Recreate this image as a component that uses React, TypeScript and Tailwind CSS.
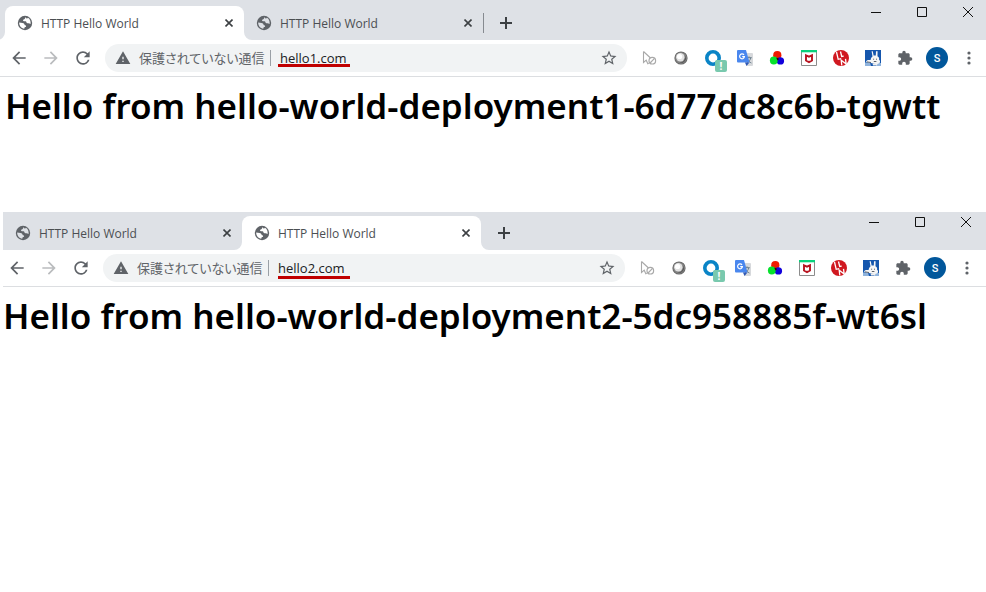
import type { ReactNode } from "react";
import { clsx } from "clsx";
import { MdArrowBack, MdArrowForward, MdExtension, MdRefresh, MdStarBorder, MdWarning } from "react-icons/md";

const UI_FONT = "font-['Open_Sans','Noto_Sans_CJK_JP',sans-serif]";
const HEADING_FONT = "font-['Noto_Sans','Open_Sans',sans-serif]";

function GlobeIcon({ land }: { land: string }) {
  return (
    <svg viewBox="0 0 16 16" className={clsx("size-4 shrink-0", land)} fill="currentColor" aria-hidden="true">
      <circle cx="8" cy="8" r="7.2" fill="#5f6368" />
      <path d="M8.6 2.2C8 3 8.3 3.7 7.3 4.2 6.5 4.6 5.9 4.6 6 5.6c.1.8 1 .7 1.9.7 1 0 1.5.4 1.6 1.2.1.7.8.8 1.5.7.9-.1 1.7.1 2.6.7.3-2.6-.6-5-2.6-6.1-.4.9-1.3 1-1.7.4-.2-.3-.3-.7-.7-1z" />
      <path d="M2.2 7.6c1.2.3 2.3.2 3.3.3 1.2.1 1.9.6 2 1.5.1.8.8.7 1.3 1 .7.5.1 1.4-.6 1.7-.8.3-.7.9-.9 1.6-3-.2-5.3-2.7-5.1-6.1z" />
    </svg>
  );
}

function CloseGlyph() {
  return (
    <svg viewBox="0 0 8 8" className="size-2" aria-hidden="true">
      <path d="M.5.5l7 7M7.5.5l-7 7" stroke="#3c4043" strokeWidth="1.6" fill="none" />
    </svg>
  );
}

function TabFoot({ side }: { side: "left" | "right" }) {
  return (
    <svg
      viewBox="0 0 8 8"
      className={clsx("absolute bottom-0 size-2", side === "left" ? "-left-2" : "-right-2")}
      aria-hidden="true"
    >
      <path d={side === "left" ? "M8 0v8H0a8 8 0 0 0 8-8z" : "M0 0v8h8a8 8 0 0 1-8-8z"} fill="#fff" />
    </svg>
  );
}

function Tab({ title, active }: { title: string; active: boolean }) {
  return (
    <div
      className={clsx(
        "relative flex h-full w-[239px] items-center pr-[11px] pl-3",
        active && "rounded-t-lg bg-white",
      )}
    >
      {active && <TabFoot side="left" />}
      <button type="button" role="tab" aria-selected={active} className="flex flex-1 items-center gap-2 text-xs text-[#4b4e52]">
        <GlobeIcon land={active ? "text-white" : "text-[#dee1e6]"} />
        <span className="pt-0.5">{title}</span>
      </button>
      <button type="button" aria-label={`Close ${title}`} className="flex size-2 items-center justify-center">
        <CloseGlyph />
      </button>
      {active && <TabFoot side="right" />}
    </div>
  );
}

function WindowControls({ className }: { className: string }) {
  return (
    <div className={clsx("ml-auto flex items-start gap-9", className)}>
      <button type="button" aria-label="Minimize">
        <svg viewBox="0 0 10 10" className="size-2.5" aria-hidden="true">
          <path d="M0 5.5h10" stroke="#111" />
        </svg>
      </button>
      <button type="button" aria-label="Maximize">
        <svg viewBox="0 0 10 10" className="size-2.5" aria-hidden="true">
          <path d="M.5.5h9v9h-9z" stroke="#111" fill="none" />
        </svg>
      </button>
      <button type="button" aria-label="Close window">
        <svg viewBox="0 0 10 10" className="size-2.5" aria-hidden="true">
          <path d="M0 0l10 10M10 0 0 10" stroke="#111" />
        </svg>
      </button>
    </div>
  );
}

function ToolButton({ label, children }: { label: string; children: ReactNode }) {
  return (
    <button type="button" aria-label={label} className="flex h-7 w-8 shrink-0 items-center justify-center text-[#5f6368]">
      {children}
    </button>
  );
}

function CursorBlockedIcon() {
  return (
    <svg viewBox="0 0 16 16" className="size-4" fill="none" stroke="#a9a9a9" aria-hidden="true">
      <path d="M2.5 1.5v11l2.7-2.3 1.6 3.6 1-.5M2.5 1.5l7 6.5" strokeWidth="1.1" />
      <circle cx="11.3" cy="10.7" r="3.3" strokeWidth="1.2" />
      <path d="M9.1 13l4.4-4.6" strokeWidth="1.2" />
    </svg>
  );
}

function SphereIcon() {
  return (
    <svg viewBox="0 0 16 16" className="size-4" aria-hidden="true">
      <circle cx="8" cy="8" r="6.6" fill="#686868" />
      <circle cx="8" cy="8" r="5.8" fill="#858585" />
      <circle cx="7.3" cy="7.3" r="4.2" fill="#e2e2e2" />
      <circle cx="6.6" cy="6.5" r="2.6" fill="#fff" />
      <path d="M12.3 5.5a5 5 0 0 1-6.8 6.8 5.5 5.5 0 0 0 6.8-6.8z" fill="#4f4f4f" />
    </svg>
  );
}

function RingAlertIcon() {
  return (
    <span className="relative block size-4">
      <svg viewBox="0 0 16 16" className="size-4" aria-hidden="true">
        <circle cx="8" cy="8" r="6.2" fill="none" stroke="#0a84c6" strokeWidth="3.6" />
      </svg>
      <span className="absolute top-2.5 left-2.5 flex h-3 w-3 items-center justify-center rounded-xs bg-[#79c9ae] text-[10px] leading-3 font-bold text-white">
        !
      </span>
    </span>
  );
}

function TranslateIcon() {
  return (
    <svg viewBox="0 0 16 16" className="size-4" aria-hidden="true">
      <path d="M6 3h9a1 1 0 0 1 1 1v11a1 1 0 0 1-1 1H9.5z" fill="#d7d9dc" />
      <path d="M9.5 7.7h5.2M12 6.4v1.3M13.8 7.7c-.3 2.2-2 4-3.8 5M10.5 9.3c.8 1.7 2.2 2.9 3.9 3.7" stroke="#6b7f8c" fill="none" />
      <path d="M1 0h8l3.5 12.5H1a1 1 0 0 1-1-1V1a1 1 0 0 1 1-1z" fill="#4a87ee" />
      <path d="M8 12.5h4.5L9.5 16z" fill="#3059b5" />
      <path d="M7 5A2.4 2.4 0 1 0 7.4 6.7H5.2" stroke="#fff" strokeWidth="1.2" fill="none" />
    </svg>
  );
}

function ColorsIcon() {
  return (
    <svg viewBox="0 0 16 16" className="size-4" aria-hidden="true">
      <circle cx="8.3" cy="5.2" r="4.1" fill="#f01a00" />
      <circle cx="11.4" cy="10.9" r="3.7" fill="#1100dc" />
      <circle cx="4.8" cy="10.5" r="3.9" fill="#06e12c" />
      <path d="M7.3 7.7l2 .2.5 1.5-1.5 1.2z" fill="#300b05" />
    </svg>
  );
}

function ShieldIcon() {
  return (
    <svg viewBox="0 0 16 16" className="size-4" aria-hidden="true">
      <path d="M.5.5h15v15H.5z" fill="#fff" stroke="#8c8c8c" />
      <path d="M0 0h16v2.3H0z" fill="#0bd17c" />
      <path d="M5 5.3 8 6.7l3-1.4v5.2l-3 1.6-3-1.6z" fill="#fff" stroke="#b8121f" strokeWidth="1.9" />
      <path d="M6.5 4.2 8 5.3l1.5-1.1z" fill="#fff" />
    </svg>
  );
}

function RedBallIcon() {
  return (
    <svg viewBox="0 0 16 16" className="size-4" aria-hidden="true">
      <circle cx="8" cy="8" r="8" fill="#d01820" />
      <path d="M3.5 2 5.2 9.3l3-.6M7.5 1.5l1.2 5 2-.3" stroke="#fff" strokeWidth="1.3" fill="none" />
      <path d="M8.8 15.3 8.2 10.3l5 3.8-.7-5.3" stroke="#fff" strokeWidth="1.3" fill="none" />
    </svg>
  );
}

function RabbitIcon() {
  return (
    <svg viewBox="0 0 16 16" className="size-4" aria-hidden="true">
      <path d="M0 0h16v16H0z" fill="#1556ad" />
      <path d="M0 12.5h5l1 3.5H0zM12 13h4v3h-5z" fill="#8fb3dc" />
      <path
        d="M6.6 1.3h1.2l.8 4.2h2.2l.2-4.2h1.6l-.1 5c1.5.8 1.9 2 1.5 3.2 1 .8 1.3 2 .8 3.3-1.5 1.6-5.3 1.6-7.3.5-2.5-.1-5.5-.4-6.5-1.7.2-1.6 2.5-1.9 4.6-1.5.3-1.5.6-2.8 1.9-3.6z"
        fill="#f6f6f6"
      />
      <path d="M8.6 8.7v1M11.5 8.7v1M8.8 11.5h2.6M2 11.9l4 .6" stroke="#333a44" strokeWidth=".8" />
      <path d="M7.5 13.5h5l-.5 2H8z" fill="#eee" />
    </svg>
  );
}

const extensions: { name: string; icon: ReactNode }[] = [
  { name: "Cursor tool", icon: <CursorBlockedIcon /> },
  { name: "Sphere", icon: <SphereIcon /> },
  { name: "Ring", icon: <RingAlertIcon /> },
  { name: "Translate", icon: <TranslateIcon /> },
  { name: "Colors", icon: <ColorsIcon /> },
  { name: "Web protection", icon: <ShieldIcon /> },
  { name: "Red ball", icon: <RedBallIcon /> },
  { name: "Rabbit", icon: <RabbitIcon /> },
  { name: "Extensions", icon: <MdExtension className="size-4" /> },
];

function AddressBar({ id, url, mark }: { id: string; url: string; mark: string }) {
  return (
    <div className="mx-1.5 flex h-7 min-w-0 flex-1 items-center rounded-full bg-[#f1f3f4] px-2.5">
      <MdWarning className="size-4 shrink-0 text-[#5f6368]" />
      <label
        htmlFor={id}
        className="ml-2 w-33 shrink-0 border-r border-[#9aa0a6] text-[13px] leading-4 whitespace-nowrap text-[#5f6368] [font-feature-settings:'palt']"
      >
        保護されていない通信
      </label>
      <div className="relative ml-[9px] min-w-0 flex-1">
        <input id={id} type="text" defaultValue={url} className="block h-7 w-full bg-transparent text-[13px] text-[#202124] outline-none" />
        <span className={clsx("absolute h-[3px] w-18 bg-[#c00000]", mark)} />
      </div>
      <button type="button" aria-label="Bookmark this page" className="-mr-px shrink-0 text-[#5f6368]">
        <MdStarBorder className="size-[18px]" />
      </button>
    </div>
  );
}

type BrowserProps = {
  id: string;
  url: string;
  activeTab: number;
  heading: string;
  frame: string;
  strip: string;
  controls: string;
  toolbar: string;
  mark: string;
  page: string;
};

function BrowserWindow({ id, url, activeTab, heading, frame, strip, controls, toolbar, mark, page }: BrowserProps) {
  return (
    <section aria-label={url} className={clsx("overflow-hidden", frame)}>
      <header className={clsx("flex bg-[#dee1e6]", strip)}>
        <div role="tablist" className="flex h-[34px] self-end">
          <Tab title="HTTP Hello World" active={activeTab === 0} />
          <Tab title="HTTP Hello World" active={activeTab === 1} />
        </div>
        <div className="flex h-[34px] items-center self-end">
          <span className={clsx("h-5 w-px", activeTab === 0 ? "bg-[#868a90]" : "bg-transparent")} />
          <button type="button" aria-label="New tab" className="ml-4">
            <svg viewBox="0 0 12 12" className="size-3" aria-hidden="true">
              <path d="M6 0v12M0 6h12" stroke="#3c4043" strokeWidth="2" />
            </svg>
          </button>
        </div>
        <WindowControls className={controls} />
      </header>
      <div className="border-b border-[#dcdee1]">
        <nav aria-label="Toolbar" className={clsx("flex h-9 items-center", toolbar)}>
          <ToolButton label="Back">
            <MdArrowBack className="size-5" />
          </ToolButton>
          <ToolButton label="Forward">
            <MdArrowForward className="size-5 text-[#babcbe]" />
          </ToolButton>
          <ToolButton label="Reload">
            <MdRefresh className="size-5" />
          </ToolButton>
          <AddressBar id={id} url={url} mark={mark} />
          {extensions.map((extension) => (
            <ToolButton key={extension.name} label={extension.name}>
              {extension.icon}
            </ToolButton>
          ))}
          <ToolButton label="Profile">
            <span className="flex size-[22px] items-center justify-center rounded-full bg-[#01579b] font-[Roboto,sans-serif] text-[11px] leading-none font-medium text-white">
              S
            </span>
          </ToolButton>
          <ToolButton label="Menu">
            <svg viewBox="0 0 4 14" className="h-3.5 w-1" fill="#5f6368" aria-hidden="true">
              <circle cx="2" cy="2" r="1.6" />
              <circle cx="2" cy="7" r="1.6" />
              <circle cx="2" cy="12" r="1.6" />
            </svg>
          </ToolButton>
        </nav>
      </div>
      <h1 className={clsx("pt-[5px] text-[35px] leading-12 font-semibold whitespace-nowrap text-black", HEADING_FONT, page)}>
        {heading}
      </h1>
    </section>
  );
}

export default function App() {
  return (
    <main className={clsx("min-h-screen bg-white", UI_FONT)}>
      <BrowserWindow
        id="address-1"
        url="hello1.com"
        activeTab={0}
        heading="Hello from hello-world-deployment1-6d77dc8c6b-tgwtt"
        frame="mb-[82px]"
        strip="h-10 pl-[5px]"
        controls="pt-[7px] pr-[13px]"
        toolbar="pl-[3px] pr-px"
        mark="bottom-[5px] -left-0.5"
        page="pl-[5px]"
      />
      <BrowserWindow
        id="address-2"
        url="hello2.com"
        activeTab={1}
        heading="Hello from hello-world-deployment2-5dc958885f-wt6sl"
        frame="ml-[3px]"
        strip="h-[38px]"
        controls="pt-[5px] pr-[15px]"
        toolbar="-ml-0.5 pr-[3px]"
        mark="bottom-[3px] left-0"
        page="pl-0"
      />
    </main>
  );
}
